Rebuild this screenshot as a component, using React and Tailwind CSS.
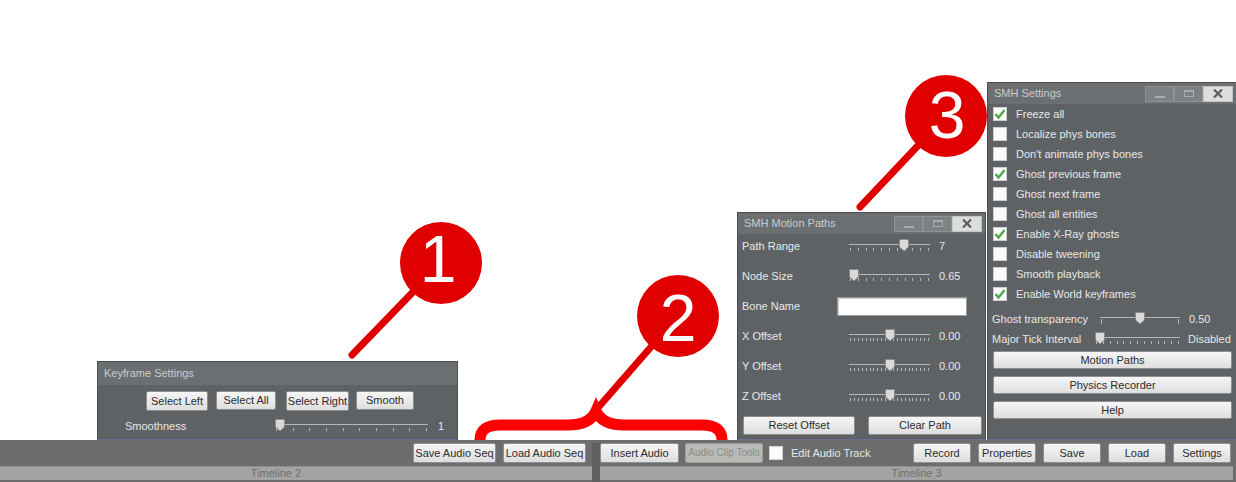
import React from 'react';

const FONT = "font-['Liberation_Sans',Arial,sans-serif]";

function Btn({ children, className = '', disabled = false }) {
  return (
    <div
      className={`flex items-center justify-center shrink-0 whitespace-nowrap border rounded-[2px] leading-none ${
        disabled
          ? 'border-[#9a9c98] bg-[#b8bab6] text-[#8a8c88] text-[10px]'
          : 'border-[#8d8f90] bg-gradient-to-b from-[#f6f6f6] to-[#dedede] text-[#2c2c2c] text-[11px]'
      } ${className}`}
    >
      {children}
    </div>
  );
}

function Check({ on }) {
  return (
    <div className="w-[14px] h-[14px] shrink-0 bg-[#fbfbfb] border border-[#d0d0d0] flex items-center justify-center">
      {on && (
        <svg width="12" height="12" viewBox="0 0 12 12">
          <path d="M1.5 6 L4.5 9.5 L10.5 2" fill="none" stroke="#4fa84f" strokeWidth="2.4" />
        </svg>
      )}
    </div>
  );
}

function Slider({ w, ticks, pos, tall = false }) {
  const tx = Array.from({ length: ticks }, (_, i) => Math.round(1 + (i * (w - 3)) / (ticks - 1)) + 0.5);
  const cx = Math.round(5 + pos * (w - 10));
  return (
    <svg width={w} height={14} className="shrink-0">
      <line x1="0" y1="5.5" x2={w} y2="5.5" stroke="#b5b8ba" />
      {tx.map((x, i) => (
        <line key={i} x1={x} y1={tall ? 7 : 9} x2={x} y2="12" stroke="#b5b8ba" />
      ))}
      <path
        d={`M${cx - 4.5} 0.5 H${cx + 4.5} V8 L${cx} 12 L${cx - 4.5} 8 Z`}
        fill="#d9d9d9"
        stroke="#8c8c8c"
      />
    </svg>
  );
}

function WinButtons() {
  return (
    <div className="flex h-[16px]">
      <div className="w-[29px] bg-[#7e8183] border border-[#909395] flex items-end justify-center pb-[3px]">
        <div className="w-[10px] h-[2px] bg-[#a9acae]" />
      </div>
      <div className="w-[29px] bg-[#7e8183] border border-[#909395] flex items-center justify-center">
        <div className="w-[10px] h-[7px] border border-t-2 border-[#a9acae]" />
      </div>
      <div className="w-[30px] bg-[#dcdddd] border border-[#c2c4c5] flex items-center justify-center">
        <svg width="10" height="9" viewBox="0 0 10 9">
          <path d="M1 0.5 L9 8.5 M9 0.5 L1 8.5" stroke="#5c5e60" strokeWidth="2.2" />
        </svg>
      </div>
    </div>
  );
}

function TitleBar({ title, buttons = true, h = 'h-[21px]' }) {
  return (
    <div className={`${h} bg-[#6c6f71] flex items-center justify-between pl-[6px] pr-[3px] shrink-0`}>
      <span className="text-[11px] text-[#c9cbcd]">{title}</span>
      {buttons && <WinButtons />}
    </div>
  );
}

function KeyframePanel() {
  return (
    <div className="absolute left-[97px] top-[361px] w-[361px] h-[79px] bg-[#5f6264] border border-[#4b4e50] border-b-[#6b6b95] flex flex-col">
      <TitleBar title="Keyframe Settings" buttons={false} h="h-[23px]" />
      <div className="flex pl-[48px] pt-[6px] items-start">
        <Btn className="w-[62px] h-[20px]">Select Left</Btn>
        <Btn className="w-[60px] h-[19px] ml-[8px]">Select All</Btn>
        <Btn className="w-[63px] h-[20px] ml-[10px]">Select Right</Btn>
        <Btn className="w-[58px] h-[19px] ml-[7px]">Smooth</Btn>
      </div>
      <div className="flex items-center h-[20px] mt-[5px] pl-[27px] text-[11px] text-[#e6e8e9]">
        <span className="w-[150px]">Smoothness</span>
        <Slider w={153} ticks={10} pos={0} />
        <span className="ml-[10px]">1</span>
      </div>
    </div>
  );
}

function MotionPanel() {
  const rows = [
    { label: 'Path Range', ticks: 11, pos: 0.7, value: '7' },
    { label: 'Node Size', ticks: 11, pos: 0, value: '0.65' },
    { label: 'Bone Name', input: true },
    { label: 'X Offset', ticks: 21, pos: 0.5, value: '0.00' },
    { label: 'Y Offset', ticks: 21, pos: 0.5, value: '0.00' },
    { label: 'Z Offset', ticks: 21, pos: 0.5, value: '0.00' },
  ];
  return (
    <div className="absolute left-[737px] top-[212px] w-[249px] h-[228px] bg-[#5f6264] border border-[#4b4e50] border-b-[#6b6b95] flex flex-col">
      <TitleBar title="SMH Motion Paths" />
      <div className="flex flex-col gap-[10px] pt-[2px] pl-[4px] text-[11px] text-[#e6e8e9]">
        {rows.map((r) => (
          <div key={r.label} className="flex items-center h-[20px]">
            {r.input ? (
              <>
                <span className="w-[95px]">{r.label}</span>
                <div className="w-[130px] h-[19px] bg-white border border-[#9a9c9e] shadow-[inset_1px_1px_0_#c8c8c8]" />
              </>
            ) : (
              <>
                <span className="w-[107px]">{r.label}</span>
                <Slider w={81} ticks={r.ticks} pos={r.pos} />
                <span className="ml-[9px]">{r.value}</span>
              </>
            )}
          </div>
        ))}
        <div className="flex gap-[13px] pl-[1px]">
          <Btn className="w-[112px] h-[19px]">Reset Offset</Btn>
          <Btn className="w-[114px] h-[19px]">Clear Path</Btn>
        </div>
      </div>
    </div>
  );
}

function SettingsPanel() {
  const checks = [
    ['Freeze all', true],
    ['Localize phys bones', false],
    ["Don't animate phys bones", false],
    ['Ghost previous frame', true],
    ['Ghost next frame', false],
    ['Ghost all entities', false],
    ['Enable X-Ray ghosts', true],
    ['Disable tweening', false],
    ['Smooth playback', false],
    ['Enable World keyframes', true],
  ];
  return (
    <div className="absolute left-[987px] top-[82px] w-[250px] h-[358px] bg-[#5f6264] border border-[#4b4e50] border-b-[#6b6b95] flex flex-col">
      <TitleBar title="SMH Settings" />
      <div className="flex flex-col text-[11px] text-[#e6e8e9]">
        {checks.map(([label, on]) => (
          <div key={label} className="flex items-center h-[20px] pl-[5px] gap-[9px]">
            <Check on={on} />
            <span>{label}</span>
          </div>
        ))}
        <div className="flex items-center h-[20px] mt-[5px] pl-[4px]">
          <span className="w-[108px]">Ghost transparency</span>
          <Slider w={80} ticks={2} pos={0.5} tall />
          <span className="ml-[9px]">0.50</span>
        </div>
        <div className="flex items-center h-[20px] pl-[4px]">
          <span className="w-[103px]">Major Tick Interval</span>
          <Slider w={85} ticks={13} pos={0} />
          <span className="ml-[8px]">Disabled</span>
        </div>
        <div className="flex flex-col gap-[7px] pl-[5px] pr-[4px] mt-[2px]">
          <Btn className="w-full h-[18px]">Motion Paths</Btn>
          <Btn className="w-full h-[18px]">Physics Recorder</Btn>
          <Btn className="w-full h-[18px]">Help</Btn>
        </div>
      </div>
    </div>
  );
}

function BottomBar() {
  return (
    <div className="h-[42px] bg-[#6b6d6e] pt-[3px] shrink-0">
      <div className="flex h-[39px] bg-[#5d5f60] gap-[8px]">
        <div className="w-[592px] flex flex-col bg-[#6b6d6e]">
          <div className="flex justify-end gap-[7px] pr-[6px] h-[20px]">
            <Btn className="w-[83px] h-[20px]">Save Audio Seq</Btn>
            <Btn className="w-[83px] h-[20px]">Load Audio Seq</Btn>
          </div>
          <div className="mt-[3px] h-[14px] bg-[#a2a3a3] border-t border-[#8e9090] flex items-center justify-center pr-[40px] text-[11px] text-[#6f7070]">
            Timeline 2
          </div>
        </div>
        <div className="flex-1 flex flex-col bg-[#6b6d6e]">
          <div className="flex items-center h-[20px]">
            <Btn className="w-[79px] h-[20px]">Insert Audio</Btn>
            <Btn className="w-[78px] h-[20px] ml-[6px]" disabled>
              Audio Clip Tools
            </Btn>
            <div className="ml-[6px]">
              <Check on={false} />
            </div>
            <span className="ml-[8px] text-[11px] text-[#e6e8e9]">Edit Audio Track</span>
            <div className="ml-auto flex gap-[7px] pr-[5px]">
              <Btn className="w-[58px] h-[20px]">Record</Btn>
              <Btn className="w-[58px] h-[20px]">Properties</Btn>
              <Btn className="w-[58px] h-[20px]">Save</Btn>
              <Btn className="w-[58px] h-[20px]">Load</Btn>
              <Btn className="w-[58px] h-[20px]">Settings</Btn>
            </div>
          </div>
          <div className="mt-[3px] mr-[3px] h-[14px] bg-[#a2a3a3] border-t border-[#8e9090] flex items-center justify-center text-[11px] text-[#6f7070]">
            Timeline 3
          </div>
        </div>
      </div>
    </div>
  );
}

function Annotations() {
  const red = '#e10000';
  const digit = { fontFamily: "'Liberation Sans', Arial, sans-serif", fontSize: 66 };
  return (
    <svg className="absolute left-0 top-0 pointer-events-none" width="1236" height="440">
      <line x1="352" y1="355" x2="441" y2="263" stroke={red} strokeWidth="7" strokeLinecap="round" />
      <line x1="596" y1="410" x2="678" y2="316" stroke={red} strokeWidth="7" strokeLinecap="round" />
      <line x1="860" y1="207" x2="946" y2="116" stroke={red} strokeWidth="7" strokeLinecap="round" />
      <path
        d="M480 440 Q480 425 500 425 L568 425 Q590 425 596 411 Q602 425 624 425 L702 425 Q722 425 722 440"
        fill="none"
        stroke="#ff0000"
        strokeWidth="11"
      />
      <circle cx="441" cy="263" r="41" fill={red} />
      <circle cx="678" cy="316" r="41" fill={red} />
      <circle cx="946" cy="116" r="41" fill={red} />
      <text x="438" y="282" textAnchor="middle" fill="#fff" style={digit}>1</text>
      <text x="678" y="341" textAnchor="middle" fill="#fff" style={digit}>2</text>
      <text x="947" y="138" textAnchor="middle" fill="#fff" style={digit}>3</text>
    </svg>
  );
}

export default function App() {
  return (
    <div className={`relative w-[1236px] h-[482px] bg-white overflow-hidden flex flex-col ${FONT}`}>
      <div className="flex-1" />
      <BottomBar />
      <KeyframePanel />
      <MotionPanel />
      <SettingsPanel />
      <Annotations />
    </div>
  );
}
